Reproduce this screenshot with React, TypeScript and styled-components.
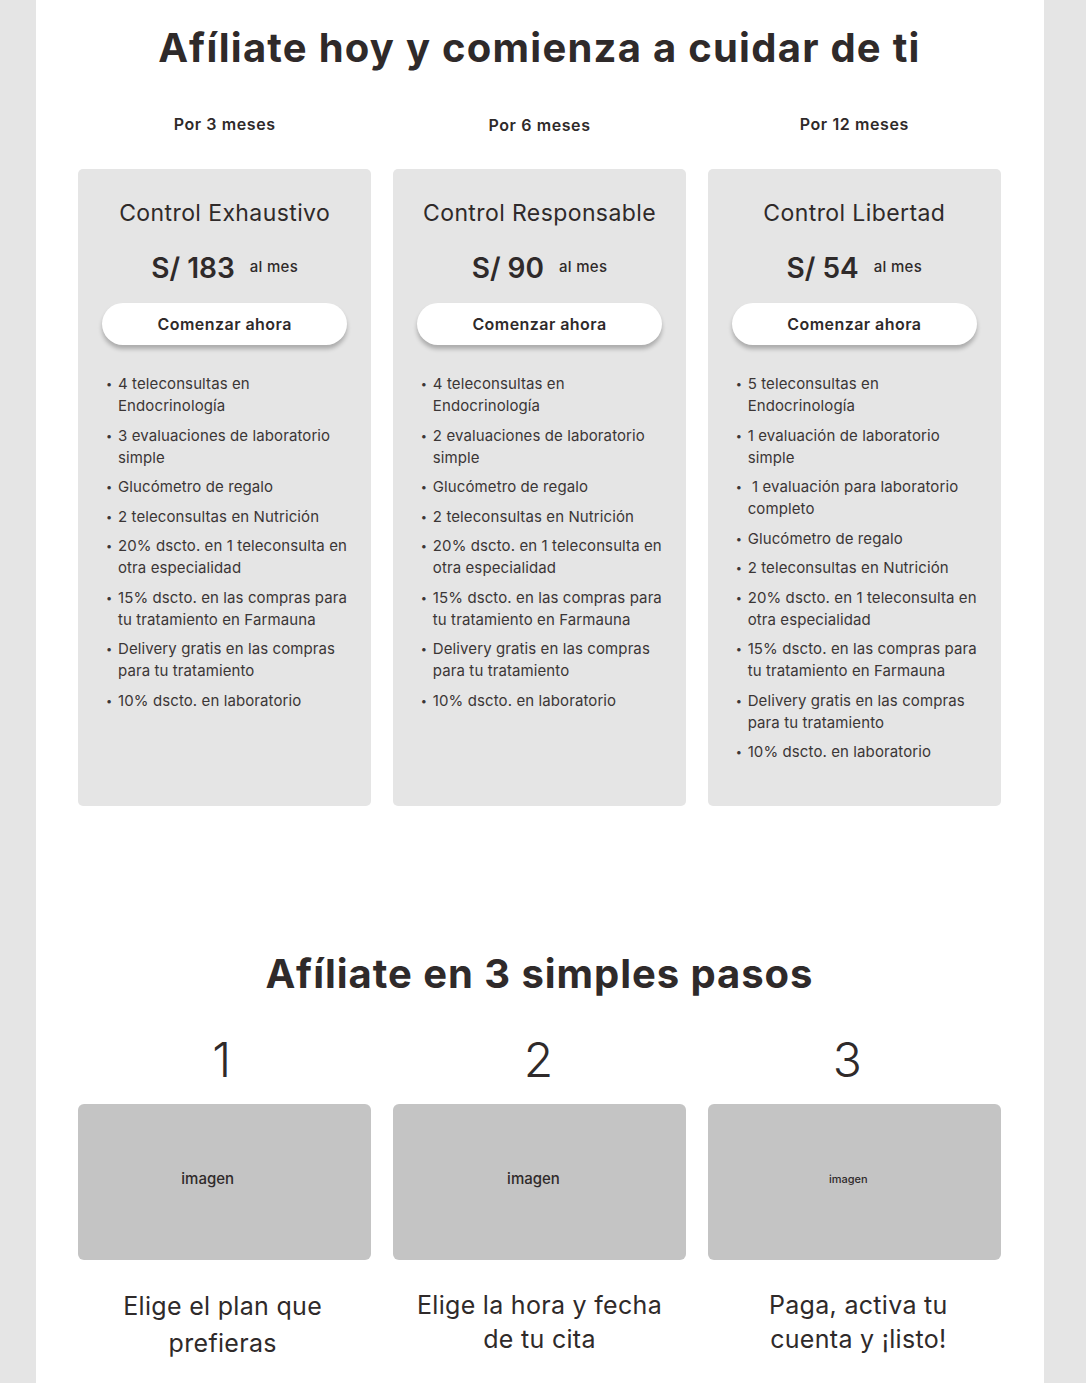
import React from "react";
import styled, { createGlobalStyle } from "styled-components";

const Global = createGlobalStyle`
  html, body { margin: 0; padding: 0; background: #e5e5e5; }
  body { font-family: Inter, "Noto Sans", sans-serif; color: #2f2a2a; }
  * { box-sizing: border-box; }
`;

const Page = styled.div`
  width: 1008px;
  margin-left: 36px;
  background: #ffffff;
  padding: 0 43px 0 42px;
  min-height: 1383px;
`;

const Heading = styled.h1<{ $ls: number }>`
  margin: 0;
  padding-top: 22px;
  font-size: 40px;
  line-height: 52px;
  font-weight: 700;
  text-align: center;
  color: #2f2a2a;
  letter-spacing: ${(p) => p.$ls}px;
`;

const Grid = styled.div`
  display: grid;
  grid-template-columns: repeat(3, 1fr);
  column-gap: 21.5px;
`;

const PeriodLabel = styled.div<{ $dy?: number }>`
  text-align: center;
  font-size: 16px;
  line-height: 22px;
  font-weight: 600;
  letter-spacing: 0.6px;
  padding-top: ${(p) => 39 + (p.$dy ?? 0)}px;
  height: 95px;
`;

const Card = styled.div`
  background: #e5e5e5;
  border-radius: 5px;
  height: 637px;
  padding: 30px 0 0;
  display: flex;
  flex-direction: column;
  align-items: stretch;
`;

const CardTitle = styled.h2`
  margin: 0;
  font-size: 23px;
  line-height: 28px;
  font-weight: 400;
  letter-spacing: 0.4px;
  text-align: center;
`;

const PriceRow = styled.div`
  margin-top: 23px;
  height: 36px;
  display: flex;
  align-items: center;
  justify-content: center;
  gap: 15px;
`;

const Price = styled.span`
  font-size: 28px;
  line-height: 36px;
  font-weight: 600;
`;

const PerMonth = styled.span`
  font-size: 15px;
  font-weight: 500;
  letter-spacing: 0.3px;
  position: relative;
  top: -2px;
`;

const Button = styled.button`
  margin: 17px 24px 0;
  height: 42px;
  border: none;
  border-radius: 21px;
  background: #ffffff;
  box-shadow: 0 4px 4px rgba(0, 0, 0, 0.25);
  font-family: inherit;
  font-size: 16px;
  font-weight: 600;
  letter-spacing: 0.45px;
  color: #2f2a2a;
`;

const List = styled.ul`
  list-style: none;
  margin: 28px 0 0;
  padding: 0 0 0 40px;
  display: flex;
  flex-direction: column;
  gap: 7.5px;
`;

const Item = styled.li`
  position: relative;
  font-size: 15px;
  line-height: 22px;
  font-weight: 400;
  letter-spacing: 0.1px;
  color: #3b3636;
  white-space: nowrap;
  &::before {
    content: "•";
    position: absolute;
    left: -12px;
    top: 0;
    font-size: 11px;
  }
`;

const Spacer = styled.div`
  height: 120px;
`;

const StepNumber = styled.div<{ $shift: number }>`
  text-align: center;
  font-size: 48px;
  line-height: 56px;
  font-weight: 300;
  padding-top: 32px;
  padding-right: ${(p) => p.$shift}px;
  height: 104px;
`;

const ImageBox = styled.div<{ $shift: number; $small?: boolean }>`
  height: 156px;
  border-radius: 6px;
  background: #c4c4c4;
  display: flex;
  align-items: center;
  justify-content: center;
  padding-right: ${(p) => p.$shift}px;
  padding-bottom: 7px;
  font-size: ${(p) => (p.$small ? 11 : 15)}px;
  font-weight: 500;
  color: #2f2a2a;
`;

const Caption = styled.p<{ $lh: number; $shift: number }>`
  margin: 0;
  padding-top: 28px;
  padding-left: ${(p) => Math.max(p.$shift, 0)}px;
  padding-right: ${(p) => Math.max(-p.$shift, 0)}px;
  text-align: center;
  font-size: 25px;
  line-height: ${(p) => p.$lh}px;
  letter-spacing: 0.3px;
  font-weight: 400;
`;

type Plan = {
  period: string;
  dy: number;
  name: string;
  price: string;
  items: string[][];
};

const plans: Plan[] = [
  {
    period: "Por 3 meses",
    dy: 0,
    name: "Control Exhaustivo",
    price: "S/ 183",
    items: [
      ["4 teleconsultas en", "Endocrinología"],
      ["3 evaluaciones de laboratorio", "simple"],
      ["Glucómetro de regalo"],
      ["2 teleconsultas en Nutrición"],
      ["20% dscto. en 1 teleconsulta en", "otra especialidad"],
      ["15% dscto. en las compras para", "tu tratamiento en Farmauna"],
      ["Delivery gratis en las compras", "para tu tratamiento"],
      ["10% dscto. en laboratorio"],
    ],
  },
  {
    period: "Por 6 meses",
    dy: 1,
    name: "Control Responsable",
    price: "S/ 90",
    items: [
      ["4 teleconsultas en", "Endocrinología"],
      ["2 evaluaciones de laboratorio", "simple"],
      ["Glucómetro de regalo"],
      ["2 teleconsultas en Nutrición"],
      ["20% dscto. en 1 teleconsulta en", "otra especialidad"],
      ["15% dscto. en las compras para", "tu tratamiento en Farmauna"],
      ["Delivery gratis en las compras", "para tu tratamiento"],
      ["10% dscto. en laboratorio"],
    ],
  },
  {
    period: "Por 12 meses",
    dy: 0,
    name: "Control Libertad",
    price: "S/ 54",
    items: [
      ["5 teleconsultas en", "Endocrinología"],
      ["1 evaluación de laboratorio", "simple"],
      ["\u00a01 evaluación para laboratorio", "completo"],
      ["Glucómetro de regalo"],
      ["2 teleconsultas en Nutrición"],
      ["20% dscto. en 1 teleconsulta en", "otra especialidad"],
      ["15% dscto. en las compras para", "tu tratamiento en Farmauna"],
      ["Delivery gratis en las compras", "para tu tratamiento"],
      ["10% dscto. en laboratorio"],
    ],
  },
];

const steps = [
  { n: "1", numShift: 6, shift: 34, small: false, lh: 37, capShift: -4, lines: ["Elige el plan que", "prefieras"] },
  { n: "2", numShift: 2, shift: 12, small: false, lh: 34, capShift: 0, lines: ["Elige la hora y fecha", "de tu cita"] },
  { n: "3", numShift: 14, shift: 12, small: true, lh: 34, capShift: 8, lines: ["Paga, activa tu", "cuenta y ¡listo!"] },
];

export default function App() {
  return (
    <>
      <Global />
      <Page>
        <Heading $ls={1.25}>Afíliate hoy y comienza a cuidar de ti</Heading>
        <Grid>
          {plans.map((p) => (
            <PeriodLabel key={p.period} $dy={p.dy}>
              {p.period}
            </PeriodLabel>
          ))}
          {plans.map((p) => (
            <Card key={p.name}>
              <CardTitle>{p.name}</CardTitle>
              <PriceRow>
                <Price>{p.price}</Price>
                <PerMonth>al mes</PerMonth>
              </PriceRow>
              <Button>Comenzar ahora</Button>
              <List>
                {p.items.map((lines, i) => (
                  <Item key={i}>
                    {lines.map((l, j) => (
                      <React.Fragment key={j}>
                        {j > 0 && <br />}
                        {l}
                      </React.Fragment>
                    ))}
                  </Item>
                ))}
              </List>
            </Card>
          ))}
        </Grid>
        <Spacer />
        <Heading as="h2" $ls={0.95}>
          Afíliate en 3 simples pasos
        </Heading>
        <Grid>
          {steps.map((s) => (
            <StepNumber key={s.n} $shift={s.numShift}>
              {s.n}
            </StepNumber>
          ))}
          {steps.map((s) => (
            <ImageBox key={s.n} $shift={s.shift} $small={s.small}>
              imagen
            </ImageBox>
          ))}
          {steps.map((s) => (
            <Caption key={s.n} $lh={s.lh} $shift={s.capShift}>
              {s.lines[0]}
              <br />
              {s.lines[1]}
            </Caption>
          ))}
        </Grid>
      </Page>
    </>
  );
}
